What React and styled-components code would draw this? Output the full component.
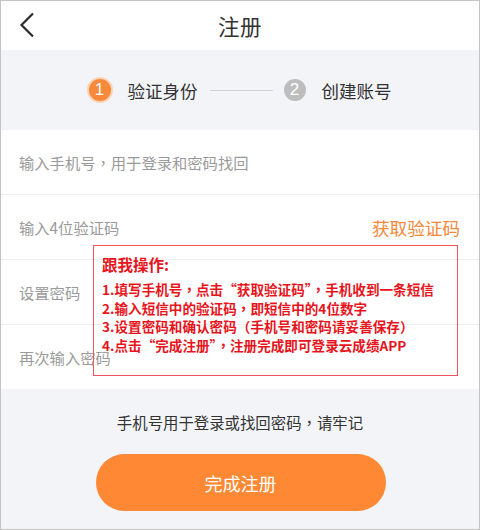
import React from "react";
import styled, { createGlobalStyle } from "styled-components";

const GlobalStyle = createGlobalStyle`
  html, body {
    margin: 0;
    padding: 0;
    background: #fff;
  }
  body {
    font-family: "Noto Sans CJK SC", "Noto Sans", sans-serif;
  }
`;

const Page = styled.div`
  position: relative;
  width: 480px;
  height: 530px;
  box-sizing: border-box;
  border: 1px solid #c4c4c4;
  background: #f2f4f7;
  display: flex;
  flex-direction: column;
  overflow: hidden;
`;

const Header = styled.div`
  height: 49px;
  background: #fff;
  display: flex;
  align-items: center;
  justify-content: center;
  position: relative;
`;

const BackButton = styled.div`
  position: absolute;
  left: 17px;
  top: 10px;
  width: 20px;
  height: 28px;
  display: flex;
  align-items: center;
`;

const Title = styled.div`
  font-size: 21.5px;
  color: #333;
  letter-spacing: 0.5px;
`;

const Steps = styled.div`
  height: 80px;
  display: flex;
  align-items: center;
  justify-content: center;
`;

const StepDot = styled.div`
  width: 22px;
  height: 22px;
  border-radius: 50%;
  background: ${(p) => (p.$active ? "#f7893a" : "#bdbdbd")};
  box-shadow: ${(p) => (p.$active ? "0 0 0 2px #fbd3b6" : "none")};
  color: #fff;
  font-family: "Liberation Sans", Arial, sans-serif;
  font-size: 17px;
  display: flex;
  align-items: center;
  justify-content: center;
  margin-right: ${(p) => p.$gap}px;
`;

const StepLabel = styled.div`
  font-size: 17.5px;
  color: #333;
`;

const StepLine = styled.div`
  width: 63px;
  height: 1px;
  background: #cfd3d8;
  margin: 0 11px 0 12px;
`;

const Form = styled.div`
  background: #fff;
  display: flex;
  flex-direction: column;
`;

const Row = styled.div`
  height: 64px;
  display: flex;
  align-items: center;
  justify-content: space-between;
  padding: 0 18px;
  &:not(:last-child) {
    border-bottom: 1px solid #eef0f2;
  }
`;

const Placeholder = styled.div`
  font-size: 15.3px;
  color: #9a9a9a;
`;

const CodeLink = styled.div`
  font-size: 17.6px;
  color: #f5883a;
  margin-right: 1px;
`;

const Footer = styled.div`
  flex: 1;
  display: flex;
  flex-direction: column;
  align-items: center;
  padding-top: 22px;
`;

const Note = styled.div`
  font-size: 15.4px;
  color: #333;
  line-height: 22px;
`;

const SubmitButton = styled.div`
  margin-top: 21px;
  width: 290px;
  height: 57px;
  border-radius: 29px;
  background: #fe8833;
  color: #fff;
  font-size: 18px;
  display: flex;
  align-items: center;
  justify-content: center;
  margin-left: 1px;
`;

const GuideBox = styled.div`
  position: absolute;
  left: 92px;
  top: 244px;
  width: 365px;
  height: 131px;
  box-sizing: border-box;
  border: 1px solid #f0555b;
  padding: 7px 0 0 8px;
  color: #e8141c;
  font-weight: 700;
`;

const GuideTitle = styled.div`
  font-size: 15.5px;
  line-height: 22px;
  margin-bottom: 5px;
`;

const GuideLine = styled.div`
  font-size: 13.6px;
  line-height: 18.5px;
  white-space: nowrap;
`;

// centred full-width punctuation, as in the screenshot
const Punct = styled.span`
  font-family: "Noto Sans CJK TC", "Noto Sans CJK SC", sans-serif;
`;

const withPunct = (text) =>
  text.split(/(，|（|）)/).map((part, i) =>
    part === "，" || part === "（" || part === "）" ? <Punct key={i}>{part}</Punct> : part
  );

const steps = [
  "1.填写手机号，点击“获取验证码”，手机收到一条短信",
  "2.输入短信中的验证码，即短信中的4位数字",
  "3.设置密码和确认密码（手机号和密码请妥善保存）",
  "4.点击“完成注册”，注册完成即可登录云成绩APP",
];

const App = () => {
  return (
    <Page>
      <GlobalStyle />
      <Header>
        <BackButton>
          <svg width="18" height="26" viewBox="0 0 18 26">
            <path d="M15 1.5 L3.5 13 L15 24.5" fill="none" stroke="#2b2b2b" strokeWidth="2.2" />
          </svg>
        </BackButton>
        <Title>注册</Title>
      </Header>
      <Steps>
        <StepDot $active $gap={17}>1</StepDot>
        <StepLabel>验证身份</StepLabel>
        <StepLine />
        <StepDot $gap={16}>2</StepDot>
        <StepLabel>创建账号</StepLabel>
      </Steps>
      <Form>
        <Row>
          <Placeholder>{withPunct("输入手机号，用于登录和密码找回")}</Placeholder>
        </Row>
        <Row>
          <Placeholder>输入4位验证码</Placeholder>
          <CodeLink>获取验证码</CodeLink>
        </Row>
        <Row>
          <Placeholder>设置密码</Placeholder>
        </Row>
        <Row>
          <Placeholder>再次输入密码</Placeholder>
        </Row>
      </Form>
      <Footer>
        <Note>{withPunct("手机号用于登录或找回密码，请牢记")}</Note>
        <SubmitButton>完成注册</SubmitButton>
      </Footer>
      <GuideBox>
        <GuideTitle>跟我操作:</GuideTitle>
        {steps.map((s) => (
          <GuideLine key={s}>{withPunct(s)}</GuideLine>
        ))}
      </GuideBox>
    </Page>
  );
};

export default App;
